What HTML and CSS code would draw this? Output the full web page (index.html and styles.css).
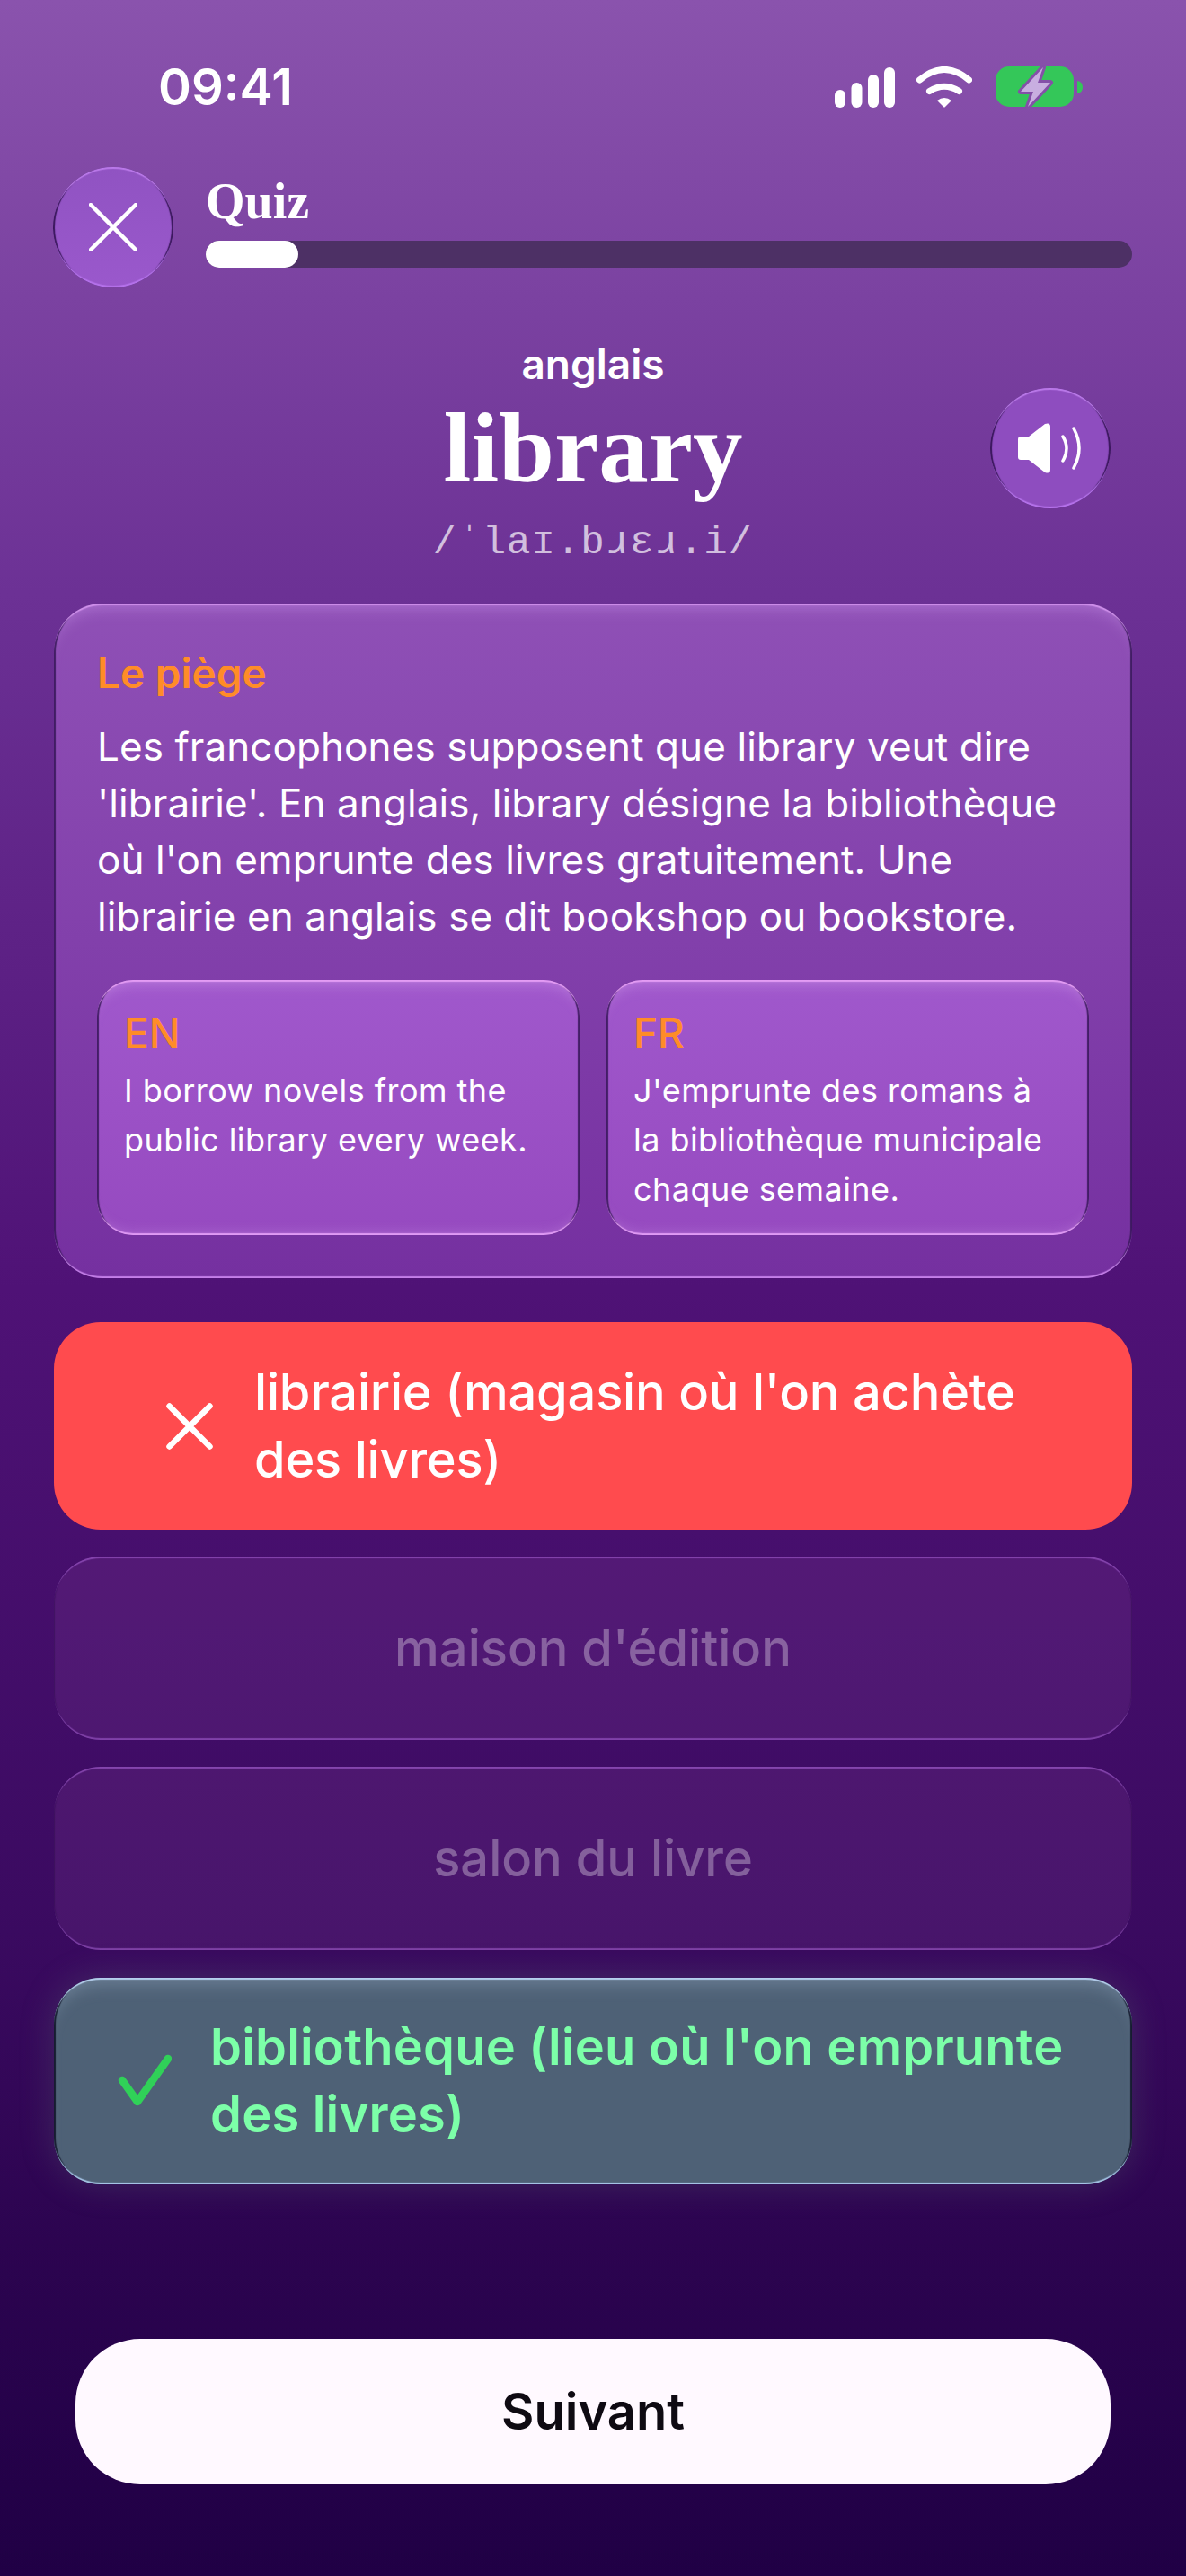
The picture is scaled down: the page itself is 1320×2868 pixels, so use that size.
FILE: index.html
```html
<!DOCTYPE html>
<html lang="fr">

<head>
    <meta charset="UTF-8">
    <meta name="viewport" content="width=device-width, initial-scale=1.0">
    <title>Quiz - library</title>
    <link rel="stylesheet" href="styles.css">
</head>

<body>
    <div class="screen">
        <div class="status">
            <span class="status__time">09:41</span>
            <div class="status__icons">
                <svg class="icon-signal" width="67" height="45" viewBox="0 0 67 45" fill="#fff">
                    <rect x="0" y="25" width="12" height="20" rx="6" />
                    <rect x="18.5" y="17" width="12" height="28" rx="6" />
                    <rect x="37" y="8" width="12" height="37" rx="6" />
                    <rect x="55" y="0" width="12" height="45" rx="6" />
                </svg>
                <svg class="icon-wifi" width="62" height="46" viewBox="0 0 62 46" fill="none" stroke="#fff"
                    stroke-width="7" stroke-linecap="round">
                    <path d="M3.5 15Q31 -8 58.5 15" />
                    <path d="M14.5 27.5Q31 17 47.5 27.5" />
                    <path d="M23 38Q31 32 39 38L32 45Q31 46 30 45Z" fill="#fff" stroke="none" />
                </svg>
                <svg class="icon-battery" width="97" height="50" viewBox="0 -2 97 50">
                    <rect x="0" y="0" width="87" height="45" rx="15" fill="#34c759" />
                    <path d="M91 16Q97 17 97 23Q97 29 91 30Z" fill="#34c759" />
                    <path d="M53 1L28 28H42L36 45L61 18H47Z" fill="#c8aee0" stroke="#8450a8" stroke-width="6"
                        stroke-linejoin="round" paint-order="stroke" />
                </svg>
            </div>
        </div>

        <div class="quiz-head">
            <button class="round-btn" type="button">
                <svg width="54" height="54" viewBox="0 0 54 54" fill="none" stroke="#fff" stroke-width="4.5"
                    stroke-linecap="round">
                    <path d="M2 2L52 52M52 2L2 52" />
                </svg>
            </button>
            <div class="quiz-head__main">
                <div class="quiz-head__title">Quiz</div>
                <div class="progress">
                    <div class="progress__fill" style="width: 10%"></div>
                </div>
            </div>
        </div>

        <div class="word">
            <div class="word__text">
                <div class="word__lang">anglais</div>
                <h1 class="word__title">library</h1>
                <div class="word__ipa">/ˈlaɪ.bɹɛɹ.i/</div>
            </div>
            <button class="round-btn word__sound" type="button">
                <svg width="72" height="56" viewBox="0 0 72 56" fill="none" stroke="#fff" stroke-width="3.5"
                    stroke-linecap="round">
                    <path d="M3 15H12L30 1Q36 -1 36 4V52Q36 57 30 55L12 41H3Q0 41 0 38V18Q0 15 3 15Z" fill="#fff"
                        stroke="none" />
                    <path d="M50 15Q58 28 50 42" />
                    <path d="M62 6Q74 28 62 50" />
                </svg>
            </button>
        </div>

        <div class="trap">
            <div class="trap__title">Le piège</div>
            <p class="trap__text">Les francophones supposent que library veut dire 'librairie'. En anglais, library
                désigne la bibliothèque où l'on emprunte des livres gratuitement. Une librairie en anglais se dit
                bookshop ou bookstore.</p>
            <div class="examples">
                <div class="example">
                    <div class="example__lang">EN</div>
                    <div class="example__text">I borrow novels from the public library every week.</div>
                </div>
                <div class="example">
                    <div class="example__lang">FR</div>
                    <div class="example__text">J'emprunte des romans à la bibliothèque municipale chaque semaine.</div>
                </div>
            </div>
        </div>

        <div class="answers">
            <div class="answer answer--wrong">
                <svg width="52" height="52" viewBox="0 0 52 52" fill="none" stroke="#fff" stroke-width="6.5"
                    stroke-linecap="round">
                    <path d="M3.5 3.5L48.5 48.5M48.5 3.5L3.5 48.5" />
                </svg>
                <span>librairie (magasin où l'on achète des livres)</span>
            </div>
            <div class="answer answer--off"><span>maison d'édition</span></div>
            <div class="answer answer--off"><span>salon du livre</span></div>
            <div class="answer answer--right">
                <svg width="60" height="60" viewBox="0 0 60 60" fill="none" stroke="#30d158" stroke-width="8.5"
                    stroke-linecap="round" stroke-linejoin="round">
                    <path d="M5 29L22 53L56 5" />
                </svg>
                <span>bibliothèque (lieu où l'on emprunte des livres)</span>
            </div>
        </div>

        <button class="next" type="button">Suivant</button>
    </div>
</body>

</html>
```

FILE: styles.css
```css
/* quiz screen */

body {
    margin: 0;
    padding: 0;
    background-color: #200045;
}

.screen {
    width: 1320px;
    height: 2868px;
    overflow: hidden;
    font-family: Inter, "Noto Sans", sans-serif;
    color: #fff;
    background: linear-gradient(180deg, #8a53ad 0%, #6c3195 23%, #4f1276 50%, #3a0a60 75%, #2c0450 87%, #200045 100%);
}

/* status bar */

.status {
    display: flex;
    justify-content: space-between;
    align-items: center;
    height: 50px;
    padding: 72px 115px 0 176px;
}

.status__time {
    font-size: 56px;
    font-weight: 600;
}

.status__icons {
    display: flex;
    align-items: center;
    gap: 24px;
}

.icon-battery {
    margin-left: 2px;
}

/* header */

.quiz-head {
    display: flex;
    gap: 36px;
    margin: 64px 60px 0 59px;
}

/* the glass rims are crescents: light on top and bottom, dark on the sides */
.round-btn {
    display: flex;
    align-items: center;
    justify-content: center;
    flex: none;
    width: 134px;
    height: 134px;
    padding: 0;
    background: linear-gradient(180deg, #9053c2, #9a58cc);
    border: none;
    border-radius: 50%;
    box-shadow: inset 0 3px 1px -1px #bb7aea, inset 0 -3px 1px -1px #b673ec,
        inset 3px 0 1px -1px rgba(40, 10, 70, 0.85), inset -3px 0 1px -1px rgba(40, 10, 70, 0.85);
}

.quiz-head__main {
    flex: 1;
}

.quiz-head__title {
    margin-top: 8px;
    font-family: "Liberation Serif", serif;
    font-size: 56px;
    font-weight: 700;
    line-height: 60px;
}

.progress {
    height: 30px;
    margin-top: 14px;
    background-color: #4d3065;
    border-radius: 15px;
}

.progress__fill {
    height: 100%;
    background-color: #fff;
    border-radius: 15px;
}

/* word */

.word {
    display: grid;
    grid-template-columns: 134px 1fr 134px;
    padding: 0 84px;
    margin-top: 60px;
}

.word__text {
    grid-column: 2;
    text-align: center;
}

.word__lang {
    font-size: 46px;
    font-weight: 600;
    line-height: 50px;
}

.word__title {
    margin: 14px 0 0;
    font-family: "Liberation Serif", serif;
    font-size: 111px;
    font-weight: 700;
    line-height: 110px;
}

.word__ipa {
    margin-top: 25px;
    font-family: "Liberation Mono", "DejaVu Sans Mono", monospace;
    font-size: 44px;
    letter-spacing: 1px;
    line-height: 50px;
    color: rgba(255, 255, 255, 0.7);
}

.word__sound {
    grid-column: 3;
    margin-top: 52px;
    background: #8e4dbf;
}

/* explanation card */

.trap {
    margin: 43px 60px 0;
    padding: 52px 48px 48px;
    background: linear-gradient(180deg, #8f50b6, #7530a0);
    border-radius: 54px;
    box-shadow: inset 0 3px 1px -1px #d090ec, inset 0 -3px 1px -1px #c47fe8,
        inset 3px 0 1px -1px rgba(50, 20, 85, 0.85), inset -3px 0 1px -1px rgba(50, 20, 85, 0.85),
        inset 0 16px 18px -12px rgba(220, 170, 250, 0.4);
}

.trap__title {
    font-size: 46px;
    font-weight: 600;
    line-height: 50px;
    color: #ff8c28;
}

.trap__text {
    margin: 26px 0 0;
    font-size: 44px;
    letter-spacing: 0.08px;
    line-height: 63px;
}

.examples {
    display: grid;
    grid-template-columns: 1fr 1fr;
    gap: 30px;
    margin-top: 39px;
}

.example {
    padding: 34px 30px 23px;
    background: linear-gradient(180deg, #a058cc, #964ac0);
    border-radius: 40px;
    box-shadow: inset 0 3px 1px -1px #e49cf4, inset 0 -3px 1px -1px #e09af4,
        inset 3px 0 1px -1px rgba(50, 20, 85, 0.85), inset -3px 0 1px -1px rgba(50, 20, 85, 0.85),
        inset 0 16px 16px -12px rgba(235, 190, 250, 0.35), inset 0 -14px 14px -12px rgba(235, 190, 250, 0.25);
}

.example__lang {
    font-size: 46px;
    font-weight: 500;
    line-height: 50px;
    color: #ff8c28;
}

.example__text {
    margin-top: 12px;
    font-size: 36px;
    letter-spacing: 0.45px;
    line-height: 55px;
}

/* answers */

.answers {
    display: flex;
    flex-direction: column;
    gap: 30px;
    margin: 49px 60px 0;
}

.answer {
    display: flex;
    align-items: center;
    justify-content: center;
    font-size: 56px;
    font-weight: 500;
    line-height: 75px;
    border-radius: 52px;
    box-sizing: border-box;
}

.answer--wrong {
    gap: 46px;
    height: 231px;
    padding: 0 60px 0 125px;
    letter-spacing: -0.22px;
    background-color: #ff4b4e;
}

.answer--off {
    height: 204px;
    color: rgba(255, 255, 255, 0.32);
    background-color: rgba(160, 90, 180, 0.14);
    box-shadow: inset 0 3px 1px -1px rgba(170, 100, 215, 0.6), inset 0 -3px 1px -1px rgba(170, 100, 215, 0.55),
        inset 2px 0 1px -1px rgba(40, 10, 70, 0.4), inset -2px 0 1px -1px rgba(40, 10, 70, 0.4);
}

.answer--right {
    gap: 43px;
    height: 230px;
    margin-top: 1px;
    padding: 0 40px 0 71px;
    font-weight: 600;
    letter-spacing: 0.2px;
    color: #7cffa8;
    background-color: #4e6176;
    box-shadow: 0 0 40px rgba(120, 180, 130, 0.2), inset 0 3px 1px -1px #b5cfee, inset 0 -3px 1px -1px #a5c4e6,
        inset 3px 0 1px -1px rgba(15, 20, 40, 0.9), inset -3px 0 1px -1px rgba(15, 20, 40, 0.9),
        inset 0 18px 20px -12px rgba(190, 210, 235, 0.3);
}

.answer--right svg,
.answer--wrong svg {
    flex: none;
}

/* next button */

.next {
    display: block;
    width: 1152px;
    height: 162px;
    margin: 172px auto 0;
    font-family: Inter, "Noto Sans", sans-serif;
    font-size: 56px;
    font-weight: 600;
    color: #0e0a12;
    background-color: #fff9ff;
    border: none;
    border-radius: 72px;
}
```
